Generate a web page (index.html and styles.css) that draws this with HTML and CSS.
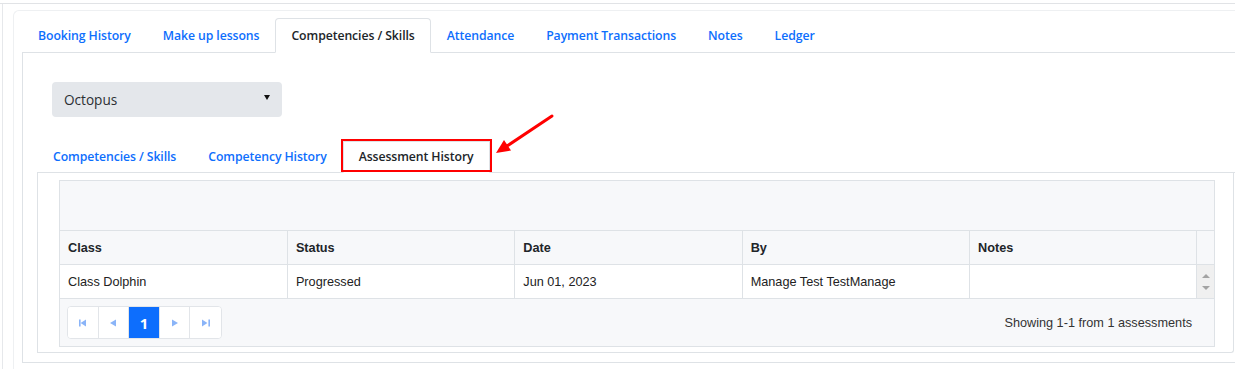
FILE: index.html
```html
<!DOCTYPE html>
<html lang="en">
<head>
    <meta charset="UTF-8">
    <meta name="viewport" content="width=device-width, initial-scale=1.0">
    <title>Student - Assessment History</title>
    <link rel="stylesheet" href="styles.css">
</head>
<body>
    <div class="topline"></div>
    <div class="wrap">
        <div class="card">
            <ul class="tabs">
                <li><a class="tab">Booking History</a></li>
                <li><a class="tab">Make up lessons</a></li>
                <li><a class="tab active">Competencies / Skills</a></li>
                <li><a class="tab">Attendance</a></li>
                <li><a class="tab">Payment Transactions</a></li>
                <li><a class="tab">Notes</a></li>
                <li><a class="tab">Ledger</a></li>
            </ul>

            <div class="pane">
                <div class="picker">
                    <div class="select">
                        <span>Octopus</span>
                        <span class="caret"></span>
                    </div>
                </div>

                <ul class="subtabs">
                    <li><a class="subtab">Competencies / Skills</a></li>
                    <li><a class="subtab">Competency History</a></li>
                    <li><a class="subtab active marked">Assessment History</a></li>
                </ul>

                <!-- annotation arrow pointing at the active sub tab -->
                <svg class="pointer" width="70" height="60" viewBox="0 0 70 60">
                    <line x1="62" y1="11" x2="17" y2="41" stroke="#ff0000" stroke-width="3" stroke-linecap="round"/>
                    <polygon points="6,48 21,45.5 14,35" fill="#ff0000"/>
                </svg>

                <div class="subpane">
                    <div class="grid">
                        <div class="toolbar"></div>
                        <table>
                            <thead>
                                <tr>
                                    <th>Class</th>
                                    <th>Status</th>
                                    <th>Date</th>
                                    <th>By</th>
                                    <th>Notes</th>
                                    <th class="gutter"></th>
                                </tr>
                            </thead>
                            <tbody>
                                <tr>
                                    <td>Class Dolphin</td>
                                    <td>Progressed</td>
                                    <td>Jun 01, 2023</td>
                                    <td>Manage Test TestManage</td>
                                    <td></td>
                                    <td class="scroll">
                                        <span class="arrow-up"></span>
                                        <span class="arrow-down"></span>
                                    </td>
                                </tr>
                            </tbody>
                        </table>
                        <div class="footer">
                            <div class="pager">
                                <button class="page-btn">
                                    <svg width="8" height="8" viewBox="0 0 8 8"><rect x="0" y="0.5" width="1.6" height="7" fill="#8ab4f8"/><polygon points="1.6,4 7,0.5 7,7.5" fill="#8ab4f8"/></svg>
                                </button>
                                <button class="page-btn">
                                    <svg width="6" height="8" viewBox="0 0 6 8"><polygon points="0,4 6,0.5 6,7.5" fill="#8ab4f8"/></svg>
                                </button>
                                <button class="page-btn current">1</button>
                                <button class="page-btn">
                                    <svg width="6" height="8" viewBox="0 0 6 8"><polygon points="6,4 0,0.5 0,7.5" fill="#8ab4f8"/></svg>
                                </button>
                                <button class="page-btn">
                                    <svg width="8" height="8" viewBox="0 0 8 8"><polygon points="5.4,4 0,0.5 0,7.5" fill="#8ab4f8"/><rect x="6.4" y="0.5" width="1.6" height="7" fill="#8ab4f8"/></svg>
                                </button>
                            </div>
                            <div class="summary">Showing 1-1 from 1 assessments</div>
                        </div>
                    </div>
                </div>
            </div>
        </div>
    </div>
</body>
</html>
```

FILE: styles.css
```css
* {
    margin: 0;
    padding: 0;
    box-sizing: border-box;
}

html {
    overflow: hidden;
}

body {
    font-family: 'Open Sans', 'Noto Sans', sans-serif;
    background: #ffffff;
    color: #212529;
    overflow: hidden;
    height: 369px;
}

.topline {
    height: 4px;
    border-bottom: 1px solid #e1e3e6;
}

.wrap {
    margin-left: 2px;
    border-left: 1px solid #e6e8eb;
    padding: 6px 0 0 10px;
    height: 365px;
}

/* card runs past the right edge of the window */
.card {
    border: 1px solid #eef0f2;
    border-right: none;
    border-top-left-radius: 6px;
    padding: 7px 0 8px 8px;
    background: #fff;
}

/* main tabs */
.tabs {
    list-style: none;
    display: flex;
    border-bottom: 1px solid #dee2e6;
}

.tab {
    display: block;
    padding: 7px 15px 6px 15px;
    font-size: 12.25px;
    font-weight: 600;
    letter-spacing: -0.08px;
    line-height: 20px;
    color: #0d6efd;
    border: 1px solid transparent;
    border-top-left-radius: 4px;
    border-top-right-radius: 4px;
    margin-bottom: -1px;
    cursor: pointer;
}

.tab.active {
    color: #212529;
    background: #fff;
    border-color: #dee2e6 #dee2e6 #fff;
}

.pane {
    position: relative;
    border: 1px solid #dee2e6;
    border-top: none;
    border-right: none;
    padding: 29px 0 8px 14px;
    height: 310px;
}

.picker {
    padding-left: 15px;
}

.select {
    width: 230px;
    height: 35px;
    background: #e4e7eb;
    border-radius: 4px;
    display: flex;
    align-items: center;
    justify-content: space-between;
    padding: 0 12px 0 12px;
    font-size: 13.6px;
    color: #2b2f33;
}

.caret {
    width: 0;
    height: 0;
    border-left: 3.5px solid transparent;
    border-right: 3.5px solid transparent;
    border-top: 5px solid #111;
    margin-top: -4px;
}

/* sub tabs */
.subtabs {
    list-style: none;
    display: flex;
    margin-top: 24px;
    border-bottom: 1px solid #dee2e6;
}

.subtab {
    display: block;
    position: relative;
    padding: 5px 15px 5px 15px;
    font-size: 12.25px;
    font-weight: 600;
    letter-spacing: -0.08px;
    line-height: 20px;
    color: #0d6efd;
    border: 1px solid transparent;
    margin-bottom: -1px;
    cursor: pointer;
}

.subtab.active {
    color: #212529;
    background: #fff;
    border-color: #dee2e6 #dee2e6 #fff;
}

.subtab.marked::after {
    content: '';
    position: absolute;
    top: -3px;
    left: -3px;
    right: -3px;
    bottom: 0;
    border: 2px solid #ff0000;
}

.pointer {
    position: absolute;
    left: 467px;
    top: 52px;
}

.subpane {
    margin-right: 1px;
    border: 1px solid #dee2e6;
    border-top: none;
    border-bottom-right-radius: 3px;
    padding: 7px 18px 5px 21px;
}

/* table */
.grid {
    border: 1px solid #dee2e6;
    background: #f7f8fa;
    font-family: 'Liberation Sans', Arial, sans-serif;
    font-size: 12.7px;
    color: #212529;
}

.toolbar {
    height: 49px;
}

table {
    width: 100%;
    border-collapse: collapse;
    table-layout: fixed;
}

th, td {
    border-top: 1px solid #dee2e6;
    border-bottom: 1px solid #dee2e6;
    border-right: 1px solid #dee2e6;
    text-align: left;
    padding: 0 8px;
    height: 34px;
    width: 227px;
}

th {
    font-weight: 700;
    background: #f7f8fa;
}

td {
    background: #fff;
    color: #222;
}

th.gutter, td.scroll {
    width: 17px;
    border-right: none;
    padding: 0;
}

td.scroll {
    background: #f0f0f0;
}

.arrow-up, .arrow-down {
    display: block;
    width: 0;
    height: 0;
    margin: 0 auto;
    border-left: 4px solid transparent;
    border-right: 4px solid transparent;
}

.arrow-up {
    border-bottom: 4px solid #a3a3a3;
    margin-bottom: 8px;
}

.arrow-down {
    border-top: 4px solid #a3a3a3;
}

.footer {
    display: flex;
    justify-content: space-between;
    align-items: center;
    padding: 7px 22px 7px 7px;
}

.pager {
    display: flex;
    border: 1px solid #e2e5e9;
    border-radius: 4px;
    overflow: hidden;
    background: #fff;
}

.page-btn {
    width: 30.6px;
    height: 31px;
    border: none;
    border-right: 1px solid #e2e5e9;
    background: #fff;
    display: flex;
    align-items: center;
    justify-content: center;
    cursor: pointer;
}

.page-btn:last-child {
    border-right: none;
}

.page-btn.current {
    background: #0d6efd;
    color: #fff;
    font-family: 'Open Sans', sans-serif;
    font-weight: 700;
    font-size: 15px;
}

.summary {
    font-size: 12.7px;
    color: #333;
}
```
